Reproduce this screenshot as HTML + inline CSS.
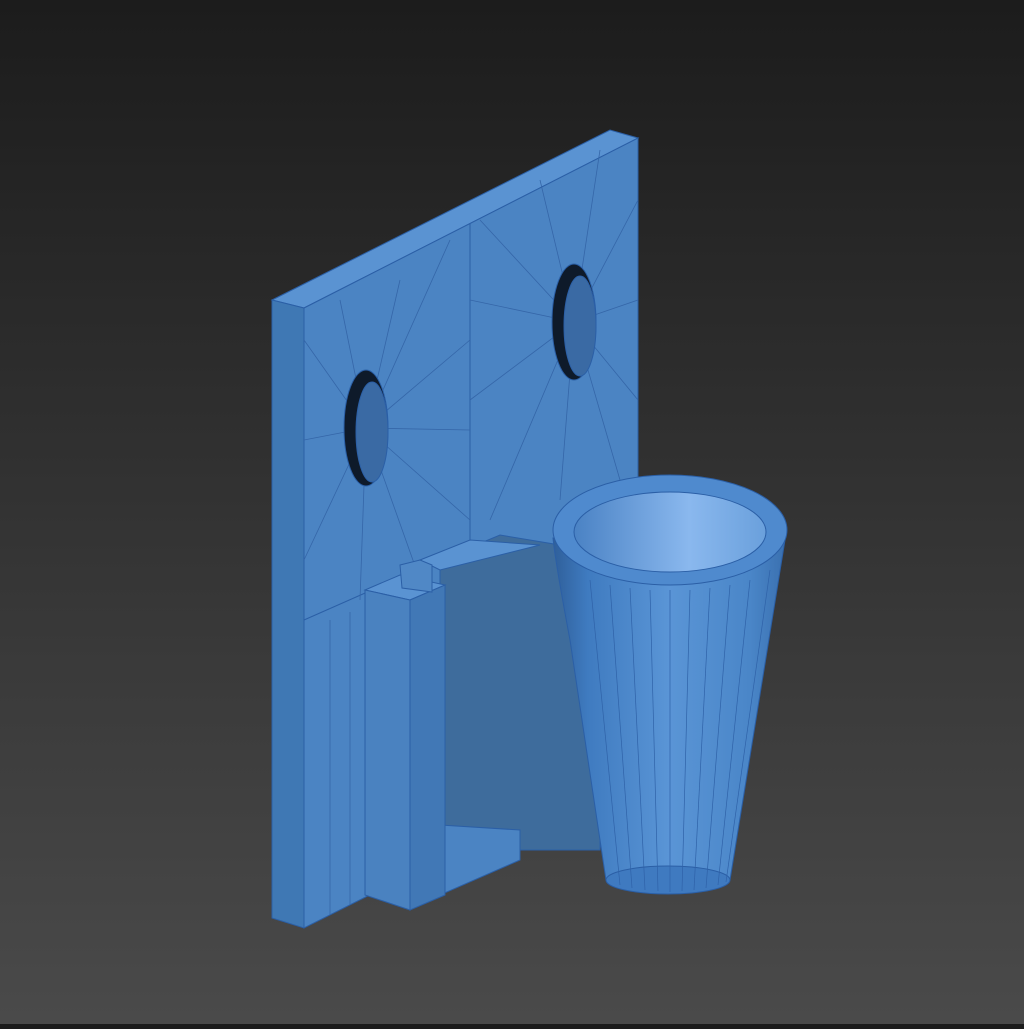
<!DOCTYPE html>
<html><head><style>html,body{margin:0;padding:0;}body{width:1024px;height:1024px;background:linear-gradient(#1c1c1c,#4a4a4a);overflow:hidden}</style></head>
<body>
<svg width="1024" height="1024" viewBox="0 0 1024 1024" xmlns="http://www.w3.org/2000/svg">
<defs>
<linearGradient id="cup" x1="0" x2="1">
<stop offset="0" stop-color="#2f5f9a"/><stop offset="0.15" stop-color="#3f7bc0"/><stop offset="0.5" stop-color="#5a95d6"/><stop offset="0.85" stop-color="#4a86c8"/><stop offset="1" stop-color="#3a70b0"/></linearGradient>
<linearGradient id="inner" x1="0" x2="1"><stop offset="0" stop-color="#4a82c4"/><stop offset="0.6" stop-color="#8ab8ee"/><stop offset="1" stop-color="#6aa0dc"/></linearGradient>
</defs>
<g stroke="#2b5fa6" stroke-width="1">
<!-- plate -->
<polygon points="272,300 610,130 638,138 304,308" fill="#5a93d2"/>
<polygon points="272,300 304,308 304,928 272,918" fill="#3f78b4"/>
<polygon points="304,308 638,138 638,760 304,928" fill="#4b84c3"/>
<line x1="470" y1="224" x2="470" y2="540"/>
<line x1="304" y1="620" x2="440" y2="560"/>
<g stroke="#3566a8" stroke-width="0.8">
<line x1="366" y1="428" x2="304" y2="340"/><line x1="366" y1="428" x2="340" y2="300"/><line x1="366" y1="428" x2="400" y2="280"/><line x1="366" y1="428" x2="450" y2="240"/><line x1="366" y1="428" x2="470" y2="340"/><line x1="366" y1="428" x2="470" y2="430"/><line x1="366" y1="428" x2="470" y2="520"/><line x1="366" y1="428" x2="420" y2="580"/><line x1="366" y1="428" x2="360" y2="600"/><line x1="366" y1="428" x2="304" y2="560"/><line x1="366" y1="428" x2="304" y2="440"/>
<line x1="574" y1="322" x2="480" y2="220"/><line x1="574" y1="322" x2="540" y2="180"/><line x1="574" y1="322" x2="600" y2="150"/><line x1="574" y1="322" x2="638" y2="200"/><line x1="574" y1="322" x2="638" y2="300"/><line x1="574" y1="322" x2="638" y2="400"/><line x1="574" y1="322" x2="620" y2="480"/><line x1="574" y1="322" x2="560" y2="500"/><line x1="574" y1="322" x2="490" y2="520"/><line x1="574" y1="322" x2="470" y2="400"/><line x1="574" y1="322" x2="470" y2="300"/>
<line x1="330" y1="620" x2="330" y2="915"/><line x1="350" y1="612" x2="350" y2="905"/>
</g>
<ellipse cx="366" cy="428" rx="22" ry="58" fill="#0e1a2a"/>
<ellipse cx="372" cy="432" rx="16" ry="50" fill="#3a6aa4"/>
<ellipse cx="574" cy="322" rx="22" ry="58" fill="#0e1a2a"/>
<ellipse cx="580" cy="326" rx="16" ry="50" fill="#3a6aa4"/>
<!-- bracket block -->
<polygon points="440,560 500,535 560,545 600,560 600,850 520,850 440,825" fill="#3e6c9c"/>
<polygon points="420,560 470,540 540,545 440,570" fill="#5a93d2"/>
<polygon points="440,825 520,830 520,860 440,895" fill="#4b84c3"/>
<!-- vertical bar -->
<polygon points="365,590 400,575 445,585 410,600" fill="#5a93d2"/>
<polygon points="365,590 410,600 410,910 365,895" fill="#4a82c0"/>
<polygon points="410,600 445,585 445,895 410,910" fill="#4178b6"/>
<polygon points="400,565 420,560 432,565 432,592 402,588" fill="#5088c6"/>
<!-- cup -->
<path d="M553,538 Q555,560 570,640 L606,880 Q668,905 730,880 L785,540 Z" fill="url(#cup)"/>
<ellipse cx="668" cy="880" rx="62" ry="14" fill="#3f7ac0"/>
<ellipse cx="670" cy="530" rx="117" ry="55" fill="#4f8ace"/>
<ellipse cx="670" cy="532" rx="96" ry="40" fill="url(#inner)"/>
<g stroke="#2f62a8" stroke-width="0.7" fill="none">
<path d="M590,580 L620,885"/><path d="M610,585 L632,888"/><path d="M630,588 L645,890"/><path d="M650,590 L658,891"/><path d="M670,590 L670,892"/><path d="M690,590 L682,891"/><path d="M710,588 L694,890"/><path d="M730,585 L706,888"/><path d="M750,580 L718,885"/><path d="M770,570 L726,882"/>
</g>
</g>
</svg>
</body></html>
